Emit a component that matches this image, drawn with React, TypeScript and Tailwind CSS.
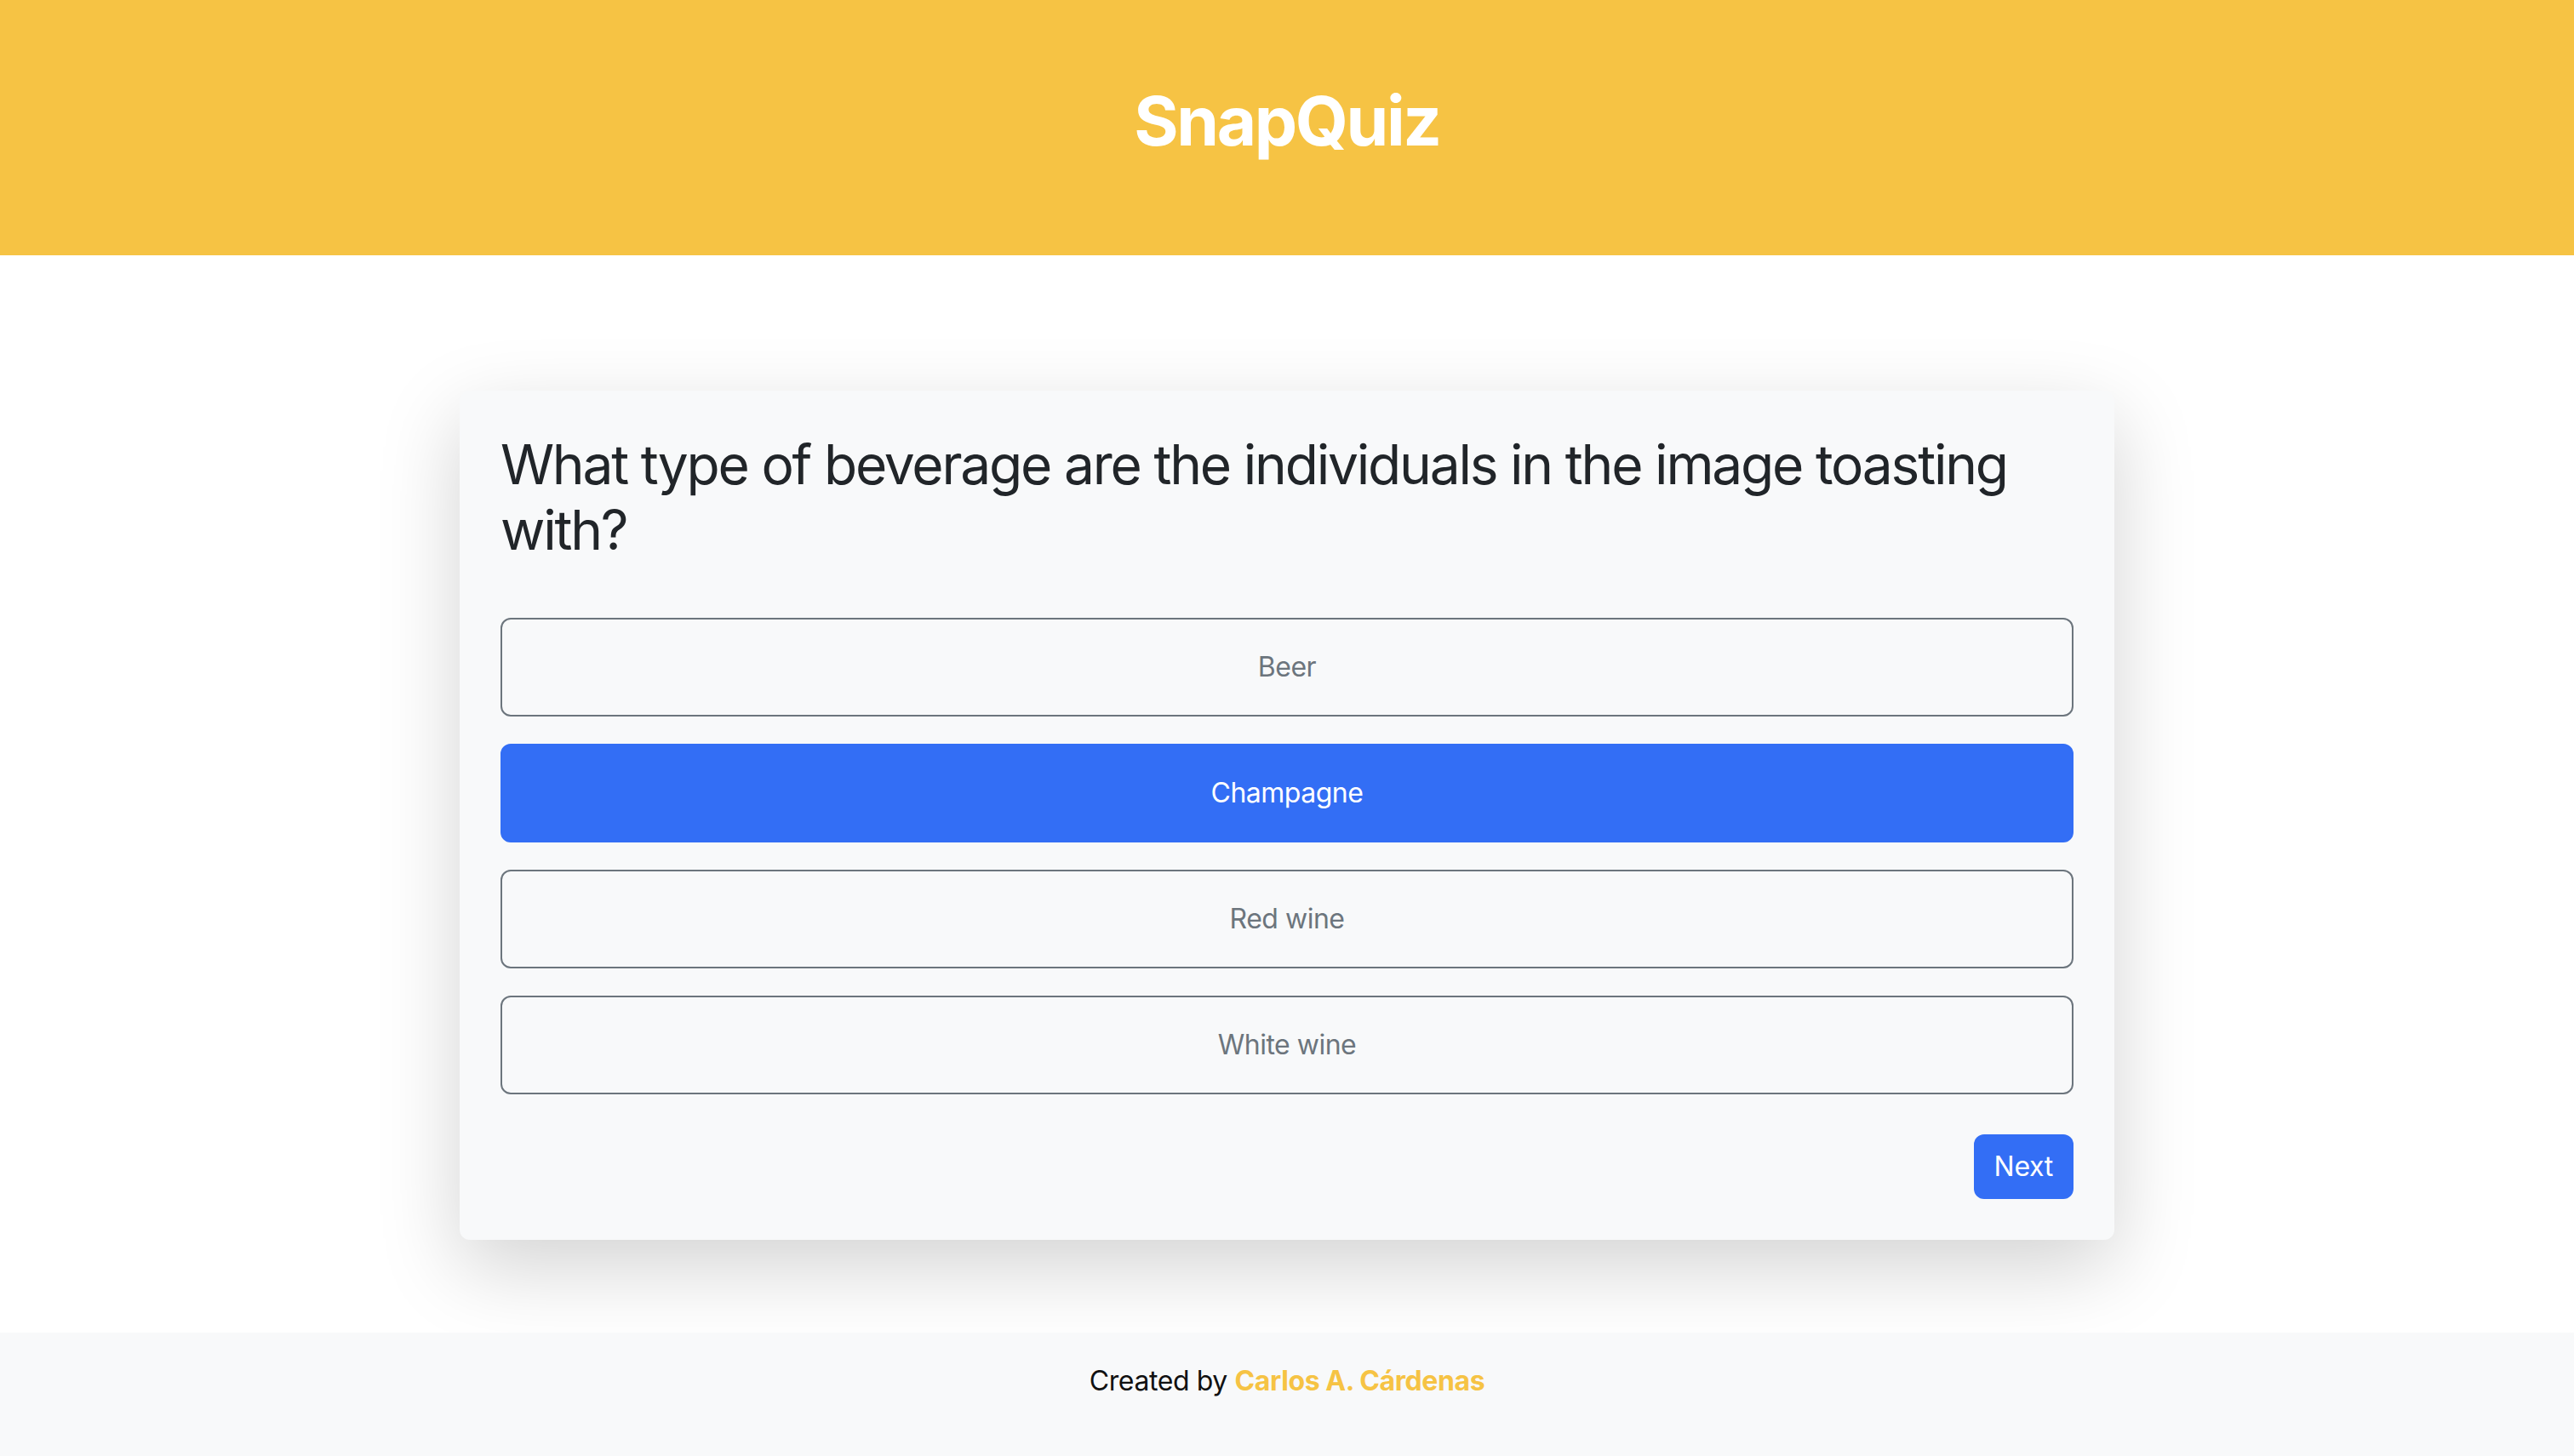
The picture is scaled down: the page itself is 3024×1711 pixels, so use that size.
import React from "react";

const options = ["Beer", "Champagne", "Red wine", "White wine"];
const selected = "Champagne";

export default function App() {
  return (
    <div
      className="min-h-[1711px] flex flex-col bg-white"
      style={{ fontFamily: "Inter, 'Noto Sans', sans-serif" }}
    >
      <header className="h-[300px] bg-[#f6c344] flex justify-center pt-[94px]">
        <h1 className="text-[80px] leading-[96px] font-bold text-white tracking-[-2.4px]">
          SnapQuiz
        </h1>
      </header>
      <main className="flex-1 flex justify-center pt-[159px] pb-[109px]">
        <div className="w-[1944px] bg-[#f8f9fa] rounded-[12px] p-[48px] shadow-[0_32px_96px_rgba(0,0,0,0.175)]">
          <h2 className="text-[64px] leading-[77px] text-[#212529] font-normal mb-[65px] tracking-[-2.2px]">
            What type of beverage are the individuals in the image toasting with?
          </h2>
          <div className="flex flex-col gap-[32px]">
            {options.map((o) =>
              o === selected ? (
                <button
                  key={o}
                  className="h-[116px] w-full rounded-[12px] bg-[#336ef5] border-2 border-[#336ef5] text-white text-[32px] tracking-[-0.5px]"
                >
                  {o}
                </button>
              ) : (
                <button
                  key={o}
                  className="h-[116px] w-full rounded-[12px] bg-transparent border-2 border-[#6c757d] text-[#6c757d] text-[32px] tracking-[-0.5px]"
                >
                  {o}
                </button>
              )
            )}
          </div>
          <div className="flex justify-end mt-[47px]">
            <button className="h-[76px] px-[24px] rounded-[12px] bg-[#336ef5] text-white text-[32px] tracking-[-0.3px]">
              Next
            </button>
          </div>
        </div>
      </main>
      <footer className="h-[145px] bg-[#f8f9fa] flex justify-center pt-[33px]">
        <p className="text-[32px] leading-[48px] text-[#111111] tracking-[-0.4px]">
          Created by{" "}
          <span className="font-bold text-[#f6c344]">Carlos A. Cárdenas</span>
        </p>
      </footer>
    </div>
  );
}
